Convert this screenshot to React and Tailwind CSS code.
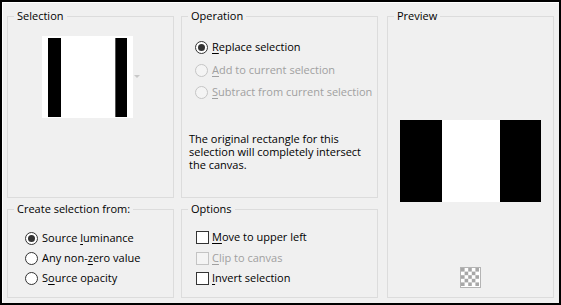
import React from 'react';

const font = { fontFamily: '"Open Sans", "Noto Sans", sans-serif' };

function Radio({ checked, disabled }) {
  const ring = disabled ? '#c4c4c4' : '#333333';
  return (
    <svg width="13" height="13" viewBox="0 0 13 13" className="shrink-0">
      <circle cx="6.5" cy="6.5" r="6" fill={disabled ? '#f4f4f4' : '#ffffff'} stroke={ring} strokeWidth="1" />
      {checked && <circle cx="6.5" cy="6.5" r="3.5" fill="#333333" />}
    </svg>
  );
}

function Check({ disabled }) {
  return (
    <span
      className={
        'block w-[13px] h-[13px] shrink-0 border ' +
        (disabled ? 'border-[#c4c4c4] bg-[#f4f4f4]' : 'border-[#333333] bg-white')
      }
    />
  );
}

function Label({ text, hot, disabled }) {
  const i = text.indexOf(hot);
  return (
    <span className={disabled ? 'text-[#a0a0a0]' : 'text-black'}>
      {text.slice(0, i)}
      <span className="underline underline-offset-2">{text.slice(i, i + 1)}</span>
      {text.slice(i + 1)}
    </span>
  );
}

function Group({ title, className, children }) {
  return (
    <fieldset className={'border border-[#dcdcdc] min-w-0 ' + className}>
      <legend className="ml-[6px] px-[3px] leading-[14px] text-black">{title}</legend>
      {children}
    </fieldset>
  );
}

function Thumb() {
  return (
    <svg width="91" height="82" viewBox="0 0 91 82" className="block">
      <rect width="91" height="82" fill="#ffffff" />
      <rect x="6" y="2" width="13" height="79" fill="#000" />
      <rect x="73" y="2" width="12" height="79" fill="#000" />
      <rect x="73" y="2" width="1" height="79" fill="#555" />
    </svg>
  );
}

function Checker() {
  const cells = [];
  for (let r = 0; r < 5; r++) {
    for (let c = 0; c < 5; c++) {
      if ((r + c) % 2 === 0) cells.push(<rect key={r + '-' + c} x={1 + c * 3.6} y={1 + r * 3.6} width="3.6" height="3.6" fill="#a8a8a8" />);
    }
  }
  return (
    <svg width="21" height="21" viewBox="0 0 21 21" className="block">
      <rect x="0.5" y="0.5" width="20" height="20" fill="#ffffff" stroke="#b4b4b4" />
      {cells}
    </svg>
  );
}

export default function App() {
  return (
    <div
      className="w-[561px] h-[305px] box-border border-2 border-black bg-[#f0f0f0] shadow-[inset_1px_1px_0_#ffffff] text-[11px] flex pl-[5px] pt-[7px] pb-[5px] overflow-hidden"
      style={font}
    >
      <div className="w-[167px] flex flex-col gap-[4px]">
        <Group title="Selection" className="h-[189px]">
          <div className="mt-[13px] ml-[34px] flex items-start">
            <Thumb />
            <span className="ml-[1px] mt-[39px] block w-0 h-0 border-l-[3px] border-r-[3px] border-t-[3px] border-l-transparent border-r-transparent border-t-[#c8c8c8]" />
          </div>
        </Group>
        <Group title="Create selection from:" className="h-[96px]">
          <div className="mt-[12px] pl-[17px] flex flex-col">
            <div className="h-[20px] flex items-center gap-[4px]">
              <Radio checked />
              <Label text="Source luminance" hot="l" />
            </div>
            <div className="h-[20px] flex items-center gap-[4px]">
              <Radio />
              <Label text="Any non-zero value" hot="z" />
            </div>
            <div className="h-[20px] flex items-center gap-[4px]">
              <Radio />
              <Label text="Source opacity" hot="o" />
            </div>
          </div>
        </Group>
      </div>

      <div className="w-[197px] ml-[7px] flex flex-col gap-[4px]">
        <Group title="Operation" className="h-[189px]">
          <div className="mt-[13px] pl-[13px] flex flex-col">
            <div className="h-[23px] flex items-center gap-[4px]">
              <Radio checked />
              <Label text="Replace selection" hot="R" />
            </div>
            <div className="h-[22px] flex items-center gap-[4px]">
              <Radio disabled />
              <Label text="Add to current selection" hot="A" disabled />
            </div>
            <div className="h-[22px] flex items-center gap-[4px]">
              <Radio disabled />
              <Label text="Subtract from current selection" hot="S" disabled />
            </div>
          </div>
          <p className="mt-[29px] pl-[7px] leading-[13px] text-black whitespace-nowrap">
            The original rectangle for this
            <br />
            selection will completely intersect
            <br />
            the canvas.
          </p>
        </Group>
        <Group title="Options" className="h-[96px]">
          <div className="mt-[11px] pl-[14px] flex flex-col">
            <div className="h-[21px] flex items-center gap-[3px]">
              <Check />
              <Label text="Move to upper left" hot="M" />
            </div>
            <div className="h-[20px] flex items-center gap-[3px]">
              <Check disabled />
              <Label text="Clip to canvas" hot="C" disabled />
            </div>
            <div className="h-[20px] flex items-center gap-[3px]">
              <Check />
              <Label text="Invert selection" hot="I" />
            </div>
          </div>
        </Group>
      </div>

      <div className="w-[167px] ml-[9px]">
        <Group title="Preview" className="h-[289px] flex flex-col items-center">
          <div className="mt-[97px] flex h-[82px] w-[141px]">
            <div className="w-[42px] bg-black" />
            <div className="w-[58px] bg-white" />
            <div className="w-[41px] bg-black" />
          </div>
          <div className="mt-[65px]">
            <Checker />
          </div>
        </Group>
      </div>
    </div>
  );
}
